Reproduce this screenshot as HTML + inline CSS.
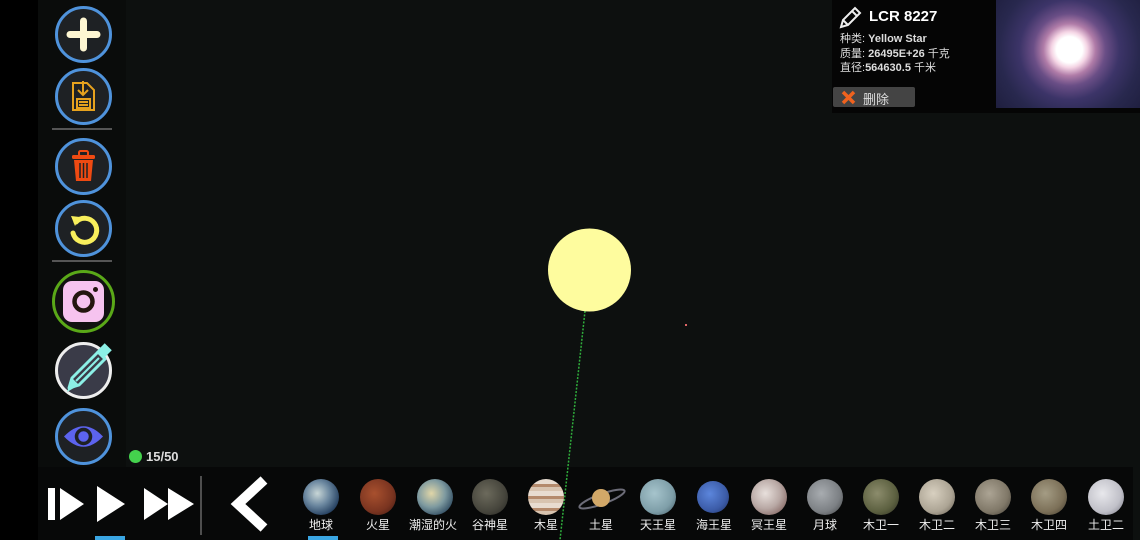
<!DOCTYPE html>
<html><head><meta charset="utf-8"><style>
*{margin:0;padding:0;box-sizing:border-box}
body{width:1140px;height:540px;overflow:hidden;background:#0d100f;position:relative;font-family:"Liberation Sans","Noto Sans CJK SC",sans-serif;color:#fff}
.abs{position:absolute}
.btn{position:absolute;left:55px;width:57px;height:57px;border-radius:50%;border:3px solid #4f93dc;background:#1e2124}
.btn svg{position:absolute;left:0;top:0}
.sep{position:absolute;left:52px;width:60px;height:2px;background:#555}
.pl{position:absolute;top:479px;width:36px;height:36px;border-radius:50%}
.lb{position:absolute;top:516px;width:60px;text-align:center;font-size:12px;color:#eee}
</style></head><body>
<div class="abs" style="left:0;top:0;width:38px;height:540px;background:#000"></div>
<div class="abs" style="left:38px;top:0;width:88px;height:470px;background:#0a0c0b"></div>
<div class="abs" style="left:38px;top:467px;width:1095px;height:73px;background:#070808"></div>

<div class="btn" style="top:6px"><svg width="51" height="51"><path d="M25.5 12V39M12 25.5H39" stroke="#fdf6d2" stroke-width="7" stroke-linecap="round"/></svg></div>
<div class="btn" style="top:68px"><svg width="51" height="51" fill="none" stroke="#e6a21e" stroke-width="2"><path d="M15 12H29L36 19V39H15Z"/><path d="M25 10V24M20 19L25 24L30 19"/><rect x="19" y="28" width="13" height="9"/><path d="M21 31H30M21 34H30"/></svg></div>
<div class="sep" style="top:128px"></div>
<div class="btn" style="top:138px"><svg width="51" height="51"><rect x="14" y="14" width="23" height="4" rx="1.5" fill="#ef4a12"/><rect x="21" y="10" width="9" height="5" rx="1.5" fill="none" stroke="#ef4a12" stroke-width="2"/><path d="M16 19H35L33 40H18Z" fill="#ef4a12"/><path d="M22 22V37M25.5 22V37M29 22V37" stroke="#1e2124" stroke-width="1.5"/></svg></div>
<div class="btn" style="top:200px"><svg width="51" height="51" fill="none"><path d="M18 19A12 12 0 1 1 15 30" stroke="#f8ef5c" stroke-width="5" stroke-linecap="round"/><path d="M13 13L22 14L17 23Z" fill="#f8ef5c"/></svg></div>
<div class="sep" style="top:260px"></div>
<div class="btn" style="top:270px;left:52px;width:63px;height:63px;border-color:#5aa818;background:#111"><svg width="57" height="57"><rect x="8" y="8" width="41" height="41" rx="9" fill="#f6c3ef"/><circle cx="28.5" cy="28.5" r="9" fill="none" stroke="#23160f" stroke-width="4.5"/><circle cx="40.5" cy="16.5" r="2.5" fill="#23160f"/></svg></div>
<div class="btn" style="top:342px;border-color:#eee;background:#3a3b48"><svg width="60" height="60" style="left:-3px;top:-3px;overflow:visible"><path d="M14 46L17 36L43 10L50 17L24 43Z" fill="none" stroke="#8cf0e6" stroke-width="3" stroke-linejoin="round"/><path d="M21 39L44 16" stroke="#8cf0e6" stroke-width="2"/><rect x="44" y="3" width="10" height="12" transform="rotate(45 49 9)" fill="#8cf0e6"/><path d="M12 50L17 36L24 43Z" fill="#8cf0e6"/></svg></div>
<div class="btn" style="top:408px"><svg width="51" height="51"><path d="M6 25.5Q25.5 5 45 25.5Q25.5 46 6 25.5Z" fill="#5c63ee"/><circle cx="25.5" cy="25.5" r="7" fill="none" stroke="#1e2124" stroke-width="3.5"/></svg></div>

<div class="abs" style="left:129px;top:450px;width:13px;height:13px;border-radius:50%;background:#44d24d"></div>
<div class="abs" style="left:146px;top:449px;font-size:13px;font-weight:bold;color:#ddd">15/50</div>

<svg class="abs" style="left:0;top:0" width="1140" height="540">
<line x1="585" y1="311" x2="560" y2="540" stroke="#2fae3c" stroke-width="1.5" stroke-dasharray="2 1.5"/>
<circle cx="589.5" cy="270" r="41.5" fill="#fefc9e"/>
<rect x="685" y="324" width="2" height="2" fill="#d66"/>
<rect x="48" y="488" width="7" height="32" fill="#fff"/>
<path d="M60 488L84 504L60 520Z" fill="#fff"/>
<path d="M97 486L125 504L97 522Z" fill="#fff"/>
<path d="M144 488L168 504L144 520Z M168 488L194 504L168 520Z" fill="#fff"/>
<rect x="95" y="536" width="30" height="4" fill="#3aa6e3"/>
<line x1="201" y1="476" x2="201" y2="535" stroke="#666" stroke-width="1.5"/>
<path d="M264 480L238 504L264 528" fill="none" stroke="#fff" stroke-width="10"/>
<rect x="308" y="536" width="30" height="4" fill="#3aa6e3"/>
</svg>

<div class="pl" style="left:303px;background:radial-gradient(circle at 40% 40%,#c8d6d6,#6c88a0 40%,#254060 75%,#0a1420)"></div>
<div class="pl" style="left:360px;background:radial-gradient(circle at 40% 40%,#a8502e,#7a3420 60%,#3c1810)"></div>
<div class="pl" style="left:417px;background:radial-gradient(circle at 40% 40%,#e0d6a8,#7e9aa0 45%,#2e4a60 80%,#0a1420)"></div>
<div class="pl" style="left:472px;background:radial-gradient(circle at 40% 40%,#6c6a5c,#46453c 60%,#232320)"></div>
<div class="pl" style="left:528px;background:repeating-linear-gradient(180deg,#e8dcd0 0 5px,#b48a6c 5px 8px,#d8c4b0 8px 12px);"></div>
<div class="pl" style="left:640px;background:radial-gradient(circle at 40% 40%,#a6c4cc,#7e9ea8 60%,#3e5660)"></div>
<div class="pl" style="left:697px;width:32px;height:32px;top:481px;background:radial-gradient(circle at 40% 40%,#5c86dc,#3c5ca8 60%,#1e2e60)"></div>
<div class="pl" style="left:751px;background:radial-gradient(circle at 40% 40%,#e8e0dc,#b8a8a4 50%,#6c4844)"></div>
<div class="pl" style="left:807px;background:radial-gradient(circle at 40% 40%,#a8acb0,#7c8084 60%,#3c3e40)"></div>
<div class="pl" style="left:863px;background:radial-gradient(circle at 40% 40%,#8c8c6c,#5c6040 60%,#2a2c20)"></div>
<div class="pl" style="left:919px;background:radial-gradient(circle at 40% 40%,#d8d0c0,#aca494 60%,#5c5448)"></div>
<div class="pl" style="left:975px;background:radial-gradient(circle at 40% 40%,#aca494,#807868 60%,#3c3830)"></div>
<div class="pl" style="left:1031px;background:radial-gradient(circle at 40% 40%,#a49c84,#7c7058 60%,#3a3428)"></div>
<div class="pl" style="left:1088px;background:radial-gradient(circle at 40% 40%,#e8e8ec,#c0c0c8 60%,#70707c)"></div>
<svg class="abs" style="left:578px;top:480px" width="50" height="36"><ellipse cx="24" cy="19" rx="24" ry="5" transform="rotate(-20 24 19)" fill="none" stroke="#6c6c78" stroke-width="2"/><circle cx="23" cy="18" r="9" fill="#d2a868"/></svg>

<div class="lb" style="left:291px">地球</div>
<div class="lb" style="left:348px">火星</div>
<div class="lb" style="left:403px">潮湿的火</div>
<div class="lb" style="left:460px">谷神星</div>
<div class="lb" style="left:516px">木星</div>
<div class="lb" style="left:571px">土星</div>
<div class="lb" style="left:628px">天王星</div>
<div class="lb" style="left:684px">海王星</div>
<div class="lb" style="left:739px">冥王星</div>
<div class="lb" style="left:795px">月球</div>
<div class="lb" style="left:851px">木卫一</div>
<div class="lb" style="left:907px">木卫二</div>
<div class="lb" style="left:963px">木卫三</div>
<div class="lb" style="left:1019px">木卫四</div>
<div class="lb" style="left:1076px">土卫二</div>

<div class="abs" style="left:832px;top:0;width:308px;height:113px;background:#050505"></div>
<div class="abs" style="left:996px;top:0;width:144px;height:108px;background:radial-gradient(circle at 51% 46%,#fff 0,#fff 13px,#f4d4e4 18px,#b07ca8 26px,#6a4e86 36px,#3c3468 50px,#28284e 70px,#1c1c3a 100px)"></div>
<svg class="abs" style="left:838px;top:4px" width="26" height="26" fill="none" stroke="#eee" stroke-width="2"><path d="M3 23L5 16L17 4L22 9L10 21Z M14 7L19 12 M5 16L10 21"/></svg>
<div class="abs" style="left:869px;top:8px;font-size:15px;font-weight:bold">LCR 8227</div>
<div class="abs" style="left:840px;top:32px;font-size:11px;line-height:14.5px;color:#ddd">种类: <b>Yellow Star</b><br>质量: <b>26495E+26</b> 千克<br>直径:<b>564630.5</b> 千米</div>
<div class="abs" style="left:833px;top:87px;width:82px;height:20px;background:#444;border-radius:2px"></div>
<svg class="abs" style="left:841px;top:90px" width="15" height="15"><path d="M2 2L13 13M13 2L2 13" stroke="#f0621e" stroke-width="3.5"/></svg>
<div class="abs" style="left:863px;top:89px;font-size:13px;color:#ddd">删除</div>
</body></html>
